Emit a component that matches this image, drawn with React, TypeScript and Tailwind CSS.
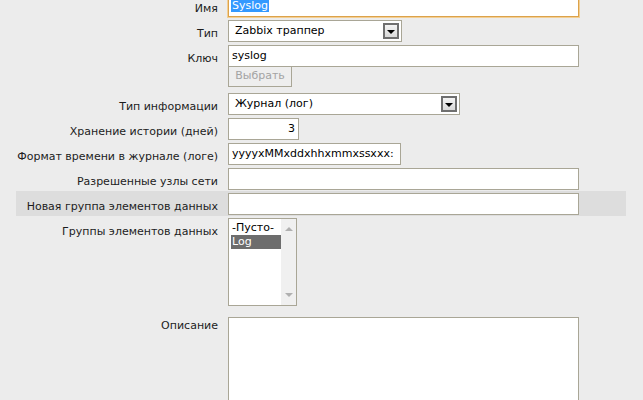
import React from 'react'
import clsx from 'clsx'

function Row({
  label,
  children,
  highlight,
  className,
  labelClass,
}: {
  label: string
  children: React.ReactNode
  highlight?: boolean
  className?: string
  labelClass?: string
}) {
  return (
    <div className={clsx('flex pt-[2px] pb-[1px]', highlight && 'bg-[#dddddd]', className)}>
      <div className={clsx('w-[202px] shrink-0 whitespace-nowrap text-right leading-[14px] text-[#1c1c1c]', labelClass ?? 'pt-[7px]')}>
        {label}
      </div>
      <div className="pl-[10px] flex flex-col items-start">{children}</div>
    </div>
  )
}

function Field({ width, children, className }: { width: string; children?: React.ReactNode; className?: string }) {
  return (
    <div
      className={clsx(
        'h-[22px] border border-[#a9a696] bg-white flex items-center px-[3px] text-black whitespace-nowrap overflow-hidden',
        width,
        className,
      )}
    >
      {children}
    </div>
  )
}

function SelectBox({ width, value }: { width: string; value: string }) {
  return (
    <div className={clsx('h-[22px] border border-[#a9a696] bg-white flex items-center pl-[6px] pr-[2px] text-black', width)}>
      <span className="flex-1">{value}</span>
      <span className="w-[16px] h-[16px] border-2 border-[#6f6f6f] bg-gradient-to-b from-[#f4f4f4] to-[#d9d9d9] flex items-end justify-center pb-[3px]">
        <span className="w-0 h-0 border-l-[4px] border-r-[4px] border-t-[4px] border-l-transparent border-r-transparent border-t-black" />
      </span>
    </div>
  )
}

export default function App() {
  return (
    <div className="w-full h-[400px] overflow-hidden bg-[#ececec] font-['DejaVu_Sans',sans-serif] text-[11px]">
      <div className="ml-[16px] w-[610px] -mt-[7px] flex flex-col">
        <Row label="Имя">
          <Field width="w-[351px]" className="border-[#dca24a] shadow-[0_0_0_1px_#f3cf94]">
            <span className="bg-[#3399ff] text-white leading-[13px] -ml-[1px] px-[1px] -mt-[1px]">Syslog</span>
          </Field>
        </Row>
        <Row label="Тип">
          <SelectBox width="w-[174px]" value="Zabbix траппер" />
        </Row>
        <Row label="Ключ" className="pb-[4px]">
          <Field width="w-[351px]">syslog</Field>
          <div className="-mt-[1px] h-[21px] w-[64px] border border-[#a9a696] bg-[#eeeeee] text-[#a3a3a3] flex items-center justify-center">
            Выбрать
          </div>
        </Row>
        <Row label="Тип информации">
          <SelectBox width="w-[232px]" value="Журнал (лог)" />
        </Row>
        <Row label="Хранение истории (дней)">
          <Field width="w-[71px]" className="justify-end">3</Field>
        </Row>
        <Row label="Формат времени в журнале (логе)">
          <Field width="w-[173px]">yyyyxMMxddxhhxmmxssxxx:</Field>
        </Row>
        <Row label="Разрешенные узлы сети">
          <Field width="w-[351px]" />
        </Row>
        <Row label="Новая группа элементов данных" highlight>
          <Field width="w-[351px]" />
        </Row>
        <Row label="Группы элементов данных" className="pb-[9px]">
          <div className="w-[69px] h-[88px] border border-[#a9a696] bg-white flex">
            <div className="flex-1 pt-[2px] pl-[2px] leading-[14px] text-black">
              <div className="px-[1px]">-Пусто-</div>
              <div className="px-[1px] bg-[#6d6d6d] text-white">Log</div>
            </div>
            <div className="w-[15px] bg-[#f0f0f0] flex flex-col items-center justify-between py-[8px]">
              <span className="w-0 h-0 border-l-[4px] border-r-[4px] border-b-[4px] border-l-transparent border-r-transparent border-b-[#b0b0b0]" />
              <span className="w-0 h-0 border-l-[4px] border-r-[4px] border-t-[4px] border-l-transparent border-r-transparent border-t-[#b0b0b0]" />
            </div>
          </div>
        </Row>
        <Row label="Описание" labelClass="pt-[2px]">
          <div className="w-[351px] h-[120px] border border-[#a9a696] bg-white" />
        </Row>
      </div>
    </div>
  )
}
